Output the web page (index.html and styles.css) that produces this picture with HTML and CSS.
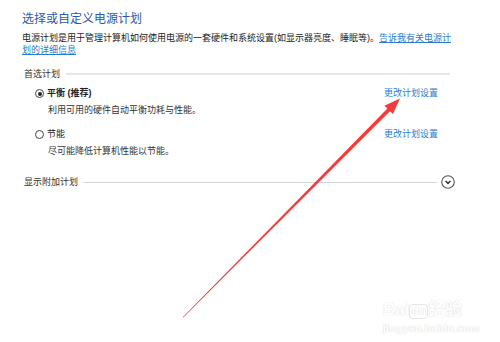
FILE: index.html
```html
<!DOCTYPE html>
<html lang="zh-CN">
<head>
    <meta charset="UTF-8">
    <title>电源选项</title>
    <link rel="stylesheet" href="styles.css">
</head>
<body>
    <div class="page">
        <h1 class="title">选择或自定义电源计划</h1>
        <p class="intro">电源计划是用于管理计算机如何使用电源的一套硬件和系统设置(如显示器亮度、睡眠等)。<a href="#">告诉我有关电源计<br>划的详细信息</a></p>

        <div class="section first">
            <span class="section-name">首选计划</span>
            <span class="rule"></span>
        </div>

        <div class="plan">
            <div class="plan-row">
                <span class="radio checked"></span>
                <span class="plan-name bold">平衡 (推荐)</span>
                <a class="plan-link" href="#">更改计划设置</a>
            </div>
            <p class="plan-desc">利用可用的硬件自动平衡功耗与性能。</p>
        </div>

        <div class="plan">
            <div class="plan-row">
                <span class="radio"></span>
                <span class="plan-name">节能</span>
                <a class="plan-link" href="#">更改计划设置</a>
            </div>
            <p class="plan-desc">尽可能降低计算机性能以节能。</p>
        </div>

        <div class="section extra">
            <span class="section-name">显示附加计划</span>
            <span class="rule"></span>
            <span class="expand">
                <svg width="14" height="14" viewBox="0 0 14 14">
                    <circle cx="7" cy="7" r="6.3" fill="none" stroke="#555" stroke-width="1.1"/>
                    <polyline points="4.6,6 7,8.3 9.4,6" fill="none" stroke="#333" stroke-width="1.6"/>
                </svg>
            </span>
        </div>
    </div>

    <!-- annotation arrow drawn over the screenshot -->
    <svg class="arrow" width="500" height="342" viewBox="0 0 500 342">
        <polygon fill="#f43b3b" points="182.7,317.3 183.3,317.5 390,111.2 393,114.1 400,98.5 384.4,105.7 387.4,108.6"/>
    </svg>

    <div class="watermark">
        <div class="wm-logo">Bai<span class="wm-du">du</span>经验</div>
        <div class="wm-url">jingyan.baidu.com</div>
    </div>
</body>
</html>
```

FILE: styles.css
```css
body {
    margin: 0;
    background-color: #fff;
    font-family: "Liberation Sans", "Noto Sans CJK SC", sans-serif;
    color: #222;
    width: 500px;
    height: 342px;
    overflow: hidden;
    position: relative;
}
a {
    color: #2b7bd0;
    text-decoration: none;
}
.page {
    padding: 11px 0 0 22px;
    width: 428px;
}
.title {
    margin: 0;
    font-size: 12px;
    line-height: 16px;
    font-weight: normal;
    color: #2d57a8;
}
.intro {
    margin: 5px 0 0;
    font-size: 9px;
    line-height: 12px;
    white-space: nowrap;
}
.intro a {
    text-decoration: underline;
}
.section {
    display: flex;
    align-items: center;
    padding-left: 2px;
    font-size: 9px;
    line-height: 12px;
    color: #333;
}
.section.first {
    margin-top: 12px;
}
.section.extra {
    margin-top: 18px;
}
.section-name {
    margin-right: 6px;
}
.rule {
    flex: 1;
    height: 2px;
    background-color: #e6e6e6;
}
.extra .section-name {
    margin-right: 5px;
}
.extra .rule {
    height: 1px;
    background-color: #d6d6d6;
}
.expand {
    display: flex;
    margin-left: 4px;
    margin-right: -5px;
}
.plan {
    margin-top: 7px;
}
.plan + .plan {
    margin-top: 12px;
}
.plan-row {
    display: flex;
    align-items: center;
    padding-left: 13px;
    font-size: 9px;
    line-height: 13px;
}
.radio {
    width: 7px;
    height: 7px;
    border: 1px solid #444;
    border-radius: 50%;
    margin-right: 3px;
    display: flex;
    align-items: center;
    justify-content: center;
}
.radio.checked::after {
    content: "";
    width: 4px;
    height: 4px;
    border-radius: 50%;
    background-color: #222;
}
.plan-name {
    flex: 1;
}
.bold {
    font-weight: bold;
}
.plan-link {
    margin-right: 12px;
}
.plan-desc {
    margin: 4px 0 0 26px;
    font-size: 9px;
    line-height: 12px;
    color: #333;
}
.arrow {
    position: absolute;
    left: 0;
    top: 0;
}
.watermark {
    position: absolute;
    left: 383px;
    top: 300px;
    color: #fff;
    text-shadow: 0 0 1px #dcdcdc, 0 0 1px #dcdcdc;
}
.wm-logo {
    font-size: 17px;
    font-weight: bold;
    line-height: 20px;
}
.wm-du {
    display: inline-block;
    font-size: 12px;
    line-height: 13px;
    padding: 0 1px;
    border: 1px solid #e6e6e6;
    border-radius: 4px;
}
.wm-url {
    font-size: 11px;
    line-height: 12px;
    font-weight: bold;
    margin-top: 2px;
}
```
